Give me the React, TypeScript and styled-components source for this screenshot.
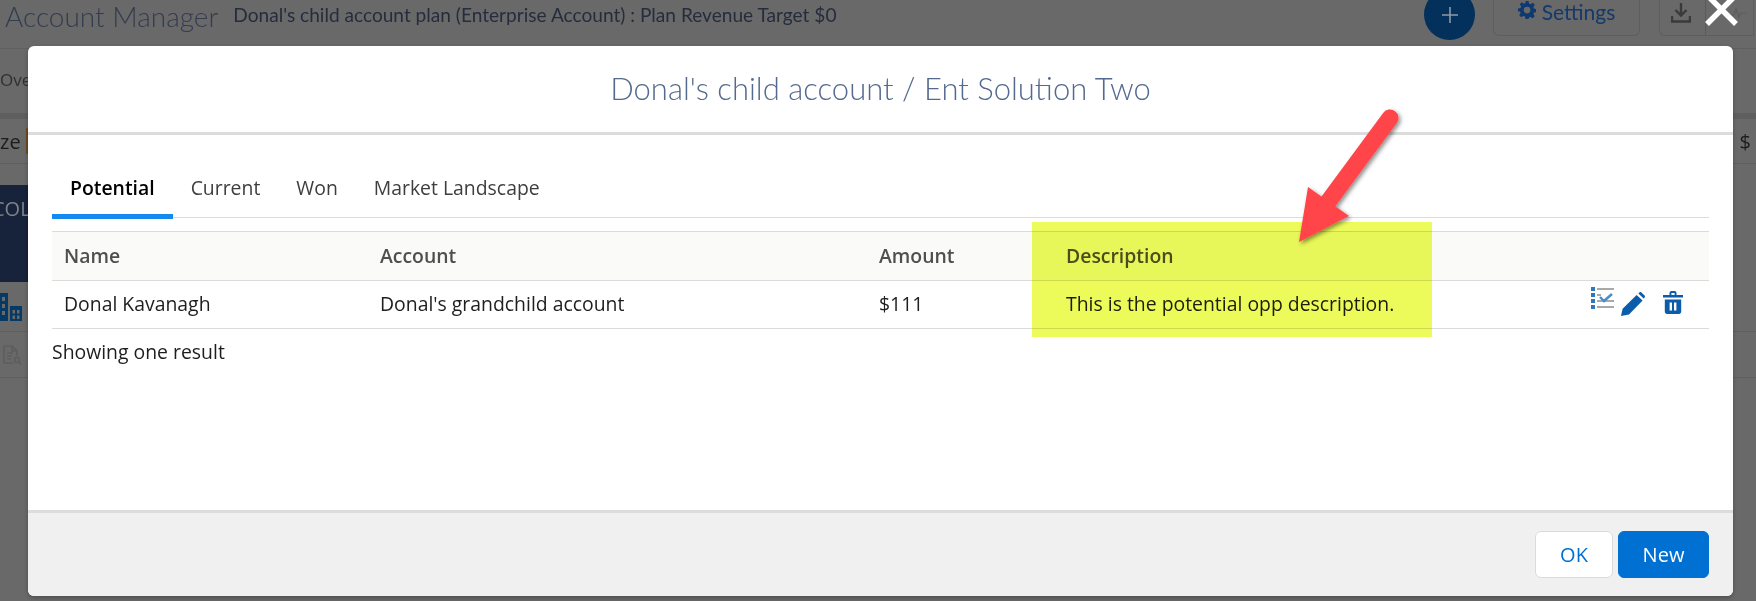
import React from "react";
import styled, { createGlobalStyle } from "styled-components";

const GlobalStyle = createGlobalStyle`
  html, body {
    margin: 0;
    padding: 0;
    background: #696969;
  }
  * {
    box-sizing: border-box;
  }
`;

const Page = styled.div`
  position: relative;
  width: 1756px;
  height: 601px;
  overflow: hidden;
  background: #696969;
  font-family: "Open Sans", "Lato", sans-serif;
`;

/* ---- page behind the dialog ---- */

const TopBar = styled.div`
  display: flex;
  align-items: flex-start;
  height: 49px;
  padding-right: 2px;
  border-bottom: 1px solid #5f5f5f;
`;

const AppName = styled.div`
  margin-left: 5px;
  margin-top: -2px;
  font-family: "Lato", sans-serif;
  font-size: 28px;
  font-weight: 300;
  line-height: 36px;
  color: #333d4e;
`;

const PlanName = styled.div`
  margin-left: 15px;
  margin-top: 3px;
  flex: 1;
  font-family: "Lato", sans-serif;
  font-size: 19.1px;
  line-height: 24px;
  color: #252d3d;
`;

const AddButton = styled.div`
  display: flex;
  align-items: center;
  justify-content: center;
  width: 51px;
  height: 51px;
  margin-top: -11px;
  border-radius: 50%;
  background: #03315c;
`;

const HeadButton = styled.div<{ $width: number; $left: number }>`
  display: flex;
  align-items: center;
  justify-content: center;
  gap: 6px;
  width: ${(p) => p.$width}px;
  height: 36px;
  margin-left: ${(p) => p.$left}px;
  padding-bottom: 12px;
  border: 1px solid #5e5e5e;
  border-top: none;
  border-radius: 0 0 6px 6px;
  font-family: "Lato", sans-serif;
  font-size: 21px;
  color: #14396a;
`;

const GroupButton = styled.div<{ $width: number; $left?: number; $end?: boolean }>`
  display: flex;
  align-items: center;
  justify-content: center;
  width: ${(p) => p.$width}px;
  height: 36px;
  margin-left: ${(p) => p.$left ?? 0}px;
  padding-bottom: 10px;
  padding-right: ${(p) => (p.$end ? 0 : 3)}px;
  border: 1px solid #5e5e5e;
  border-top: none;
  border-left: ${(p) => (p.$end ? "1px solid #5a5a5a" : "1px solid #5e5e5e")};
  border-right: ${(p) => (p.$end ? "1px solid #5e5e5e" : "none")};
  border-radius: ${(p) => (p.$end ? "0" : "0 0 0 6px")};
`;

const NavRow = styled.div`
  height: 64px;
  padding-top: 19px;
  font-size: 17px;
  line-height: 24px;
  color: #303030;
`;

const Band = styled.div`
  height: 6px;
  background: #5f5f5f;
`;

const FilterRow = styled.div`
  display: flex;
  justify-content: space-between;
  height: 45px;
  padding-top: 9px;
  border-bottom: 1px solid #5f5f5f;
  font-size: 20px;
  line-height: 28px;
  color: #1c1c1c;
`;

const SizeLabel = styled.span`
  width: 28px;
  height: 26px;
  border-right: 2px solid #6b4a1f;
`;

const DollarLabel = styled.span`
  margin-right: 5px;
`;

const DarkBlock = styled.div`
  width: 28px;
  height: 97px;
  margin-top: 21px;
  padding-top: 10px;
  overflow: hidden;
  background: #17233a;
  font-size: 20px;
  line-height: 28px;
  color: #7c8288;
  white-space: nowrap;
  text-indent: -8px;
`;

const RailRow = styled.div<{ $height: number }>`
  display: flex;
  align-items: center;
  height: ${(p) => p.$height}px;
  border-bottom: 1px solid #5f5f5f;
`;

/* ---- dialog ---- */

const Modal = styled.div`
  position: absolute;
  left: 28px;
  top: 46px;
  display: flex;
  flex-direction: column;
  width: 1705px;
  height: 550px;
  border-radius: 6px;
  overflow: hidden;
  background: #fff;
  box-shadow: 0 2px 4px rgba(0, 0, 0, 0.25);
`;

const ModalHeader = styled.div`
  display: flex;
  align-items: center;
  justify-content: center;
  height: 89px;
  padding-bottom: 3px;
  border-bottom: 3px solid #dcdcdc;
  font-family: "Lato", sans-serif;
  font-size: 31px;
  font-weight: 300;
  color: #54698d;
`;

const ModalBody = styled.div`
  flex: 1;
  padding: 35px 24px 0;
`;

const Tabs = styled.div`
  display: flex;
  height: 48px;
  border-bottom: 1px solid #d8dde6;
`;

const Tab = styled.div<{ $active?: boolean }>`
  height: 49px;
  padding: 0 18px;
  border-bottom: 5px solid ${(p) => (p.$active ? "#1589ee" : "transparent")};
  font-size: 19.4px;
  font-weight: ${(p) => (p.$active ? 600 : 400)};
  line-height: 36px;
  color: ${(p) => (p.$active ? "#000" : "#3e3e3c")};
`;

const Table = styled.div`
  margin-top: 13px;
  border-top: 1px solid #dddbda;
`;

const Row = styled.div<{ $head?: boolean }>`
  display: grid;
  grid-template-columns: 316px 499px 187px 1fr 118px;
  align-items: center;
  height: ${(p) => (p.$head ? 49 : 48)}px;
  padding-bottom: 2px;
  border-bottom: 1px solid #dddbda;
  background: ${(p) => (p.$head ? "#fafaf9" : "#fff")};
  font-size: 19.4px;
  font-weight: ${(p) => (p.$head ? 600 : 400)};
  color: ${(p) => (p.$head ? "#514f4d" : "#1e1e1e")};
`;

const Cell = styled.div`
  padding-left: 12px;
`;

const Actions = styled.div`
  display: flex;
  align-items: center;
  gap: 7px;
`;

const ResultCount = styled.div`
  margin-top: 11px;
  font-size: 19.4px;
  line-height: 24px;
  color: #1e1e1e;
`;

const ModalFooter = styled.div`
  display: flex;
  justify-content: flex-end;
  gap: 5px;
  height: 86px;
  padding: 18px 24px 0 0;
  border-top: 3px solid #dcdcdc;
  background: #f0f0f0;
`;

const FooterButton = styled.button<{ $primary?: boolean }>`
  width: ${(p) => (p.$primary ? 91 : 78)}px;
  height: 47px;
  border: 1px solid ${(p) => (p.$primary ? "#0070d2" : "#dddbda")};
  border-radius: 6px;
  background: ${(p) => (p.$primary ? "#0070d2" : "#fff")};
  color: ${(p) => (p.$primary ? "#fff" : "#0070d2")};
  font-family: inherit;
  font-size: 20px;
`;

/* ---- things lying over the dialog ---- */

const Highlight = styled.div`
  position: absolute;
  left: 1032px;
  top: 222px;
  width: 400px;
  height: 115px;
  background: #ecfb5a;
  mix-blend-mode: multiply;
`;

const Overlay = styled.svg`
  position: absolute;
  left: 0;
  top: 0;
  pointer-events: none;
`;

const ListIcon = () => (
  <svg width="23" height="23" viewBox="0 0 23 23" style={{ marginTop: -11 }}>
    <g fill="#2f79b9">
      <rect x="0" y="0" width="4" height="4" />
      <rect x="0" y="6" width="4" height="4" />
      <rect x="0" y="12" width="4" height="4" />
      <rect x="0" y="18" width="4" height="4" />
    </g>
    <g fill="#a9a9a9">
      <rect x="6" y="1" width="17" height="2" />
      <rect x="6" y="7" width="4" height="2" />
      <rect x="6" y="13" width="17" height="2" />
      <rect x="6" y="19" width="17" height="2" />
    </g>
    <path d="M9 10l4 4 8-7" fill="none" stroke="#4a8cc6" strokeWidth="2.400" />
  </svg>
);

const PencilIcon = () => (
  <svg width="24" height="24" viewBox="0 0 24 24">
    <path
      d="M0 24l1.600-7.200L15.600 3l6 5.600L8 22.400zM17.400 1.400l1-1c.6-.5 1.400-.5 2 0l3.200 3c.5.6.5 1.400 0 2l-1 1z"
      fill="#0b5cab"
    />
  </svg>
);

const TrashIcon = () => (
  <svg width="20" height="23" viewBox="0 0 20 23" style={{ marginLeft: 11, marginTop: -2 }}>
    <path
      d="M0 4h6.500V2c0-1 .7-2 2-2h3c1.300 0 2 1 2 2v2H20v2.400H0zM8.400 4h3.200V2H8.400zM1.800 8.400h16.400v12.400c0 1.200-1 2.200-2.200 2.200H4c-1.200 0-2.200-1-2.200-2.200zM6.600 11.500v8h2.400v-8zM11 11.500v8h2.400v-8z"
      fill="#0b5cab"
      fillRule="evenodd"
    />
  </svg>
);

const GearIcon = () => (
  <svg width="18" height="18" viewBox="0 0 24 24" style={{ marginTop: -4 }}>
    <path
      d="M10 0h4l.7 3.400 2 .8L19.600 2.300l2.800 2.800-1.900 2.900.8 2 3.400.7v4l-3.400.7-.8 2 1.900 2.900-2.800 2.800-2.900-1.900-2 .8L14 24h-4l-.7-3.400-2-.8-2.900 1.900-2.800-2.800 1.900-2.900-.8-2L0 14v-4l3.400-.7.8-2-1.900-2.900 2.800-2.800 2.900 1.900 2-.8zM12 7.500a4.500 4.500 0 1 0 0 9 4.500 4.500 0 0 0 0-9z"
      fill="#0f3a70"
      fillRule="evenodd"
    />
  </svg>
);

const BuildingIcon = () => (
  <svg width="22" height="28" viewBox="0 0 22 28">
    <path
      d="M-3 0h11v28H-3zM10 13h12v15H10zM2 4v4h3V4zM2 11v4h3v-4zM2 18v4h3v-4zM12.500 17v3.500H15V17zM17 17v3.500h2.500V17zM12.500 22.500V26H15v-3.500zM17 22.500V26h2.500v-3.500z"
      fill="#063a66"
      fillRule="evenodd"
    />
  </svg>
);

const DocIcon = () => (
  <svg width="20" height="20" viewBox="0 0 20 20" style={{ marginLeft: 3 }}>
    <path
      d="M1 1h8l5 5v5M1 1v17h9M4 8h6M4 11h5M4 14h4M9 1v5h5"
      fill="none"
      stroke="#5d5d5d"
      strokeWidth="1.600"
    />
    <circle cx="14" cy="15" r="2.500" fill="none" stroke="#5d5d5d" strokeWidth="1.600" />
    <path d="M16 17l2.500 2.500" stroke="#5d5d5d" strokeWidth="1.600" />
  </svg>
);

export default function App() {
  return (
    <Page>
      <GlobalStyle />
      <TopBar>
        <AppName>Account Manager</AppName>
        <PlanName>Donal's child account plan (Enterprise Account) : Plan Revenue Target $0</PlanName>
        <AddButton>
          <svg width="16" height="16" viewBox="0 0 16 16">
            <path d="M8 0v16M0 8h16" stroke="#8f9aa5" strokeWidth="1.600" />
          </svg>
        </AddButton>
        <HeadButton $width={147} $left={18}>
          <GearIcon />
          Settings
        </HeadButton>
        <GroupButton $width={46} $left={19}>
          <svg width="20" height="20" viewBox="0 0 20 20">
            <path d="M10 0v12M4.500 7l5.500 5.500L15.500 7" fill="none" stroke="#3a3a3a" strokeWidth="2.400" />
            <path d="M1 13v5.500h18V13" fill="none" stroke="#3a3a3a" strokeWidth="2.400" />
          </svg>
        </GroupButton>
        <GroupButton $width={49} $end>
          <svg width="18" height="12" viewBox="0 0 18 12" style={{ marginLeft: 16 }}>
            <path d="M0 8h5l2-6 3 8 2-4h6" fill="none" stroke="#5c5c5c" strokeWidth="1.200" />
          </svg>
        </GroupButton>
      </TopBar>
      <NavRow>Ove</NavRow>
      <Band />
      <FilterRow>
        <SizeLabel>ze</SizeLabel>
        <DollarLabel>$</DollarLabel>
      </FilterRow>
      <DarkBlock>COL</DarkBlock>
      <RailRow $height={50}>
        <BuildingIcon />
      </RailRow>
      <RailRow $height={46}>
        <DocIcon />
      </RailRow>

      <Modal>
        <ModalHeader>Donal's child account / Ent Solution Two</ModalHeader>
        <ModalBody>
          <Tabs>
            <Tab $active>Potential</Tab>
            <Tab>Current</Tab>
            <Tab>Won</Tab>
            <Tab>Market Landscape</Tab>
          </Tabs>
          <Table>
            <Row $head>
              <Cell>Name</Cell>
              <Cell>Account</Cell>
              <Cell>Amount</Cell>
              <Cell>Description</Cell>
              <div />
            </Row>
            <Row>
              <Cell>Donal Kavanagh</Cell>
              <Cell>Donal's grandchild account</Cell>
              <Cell>$111</Cell>
              <Cell>This is the potential opp description.</Cell>
              <Actions>
                <ListIcon />
                <PencilIcon />
                <TrashIcon />
              </Actions>
            </Row>
          </Table>
          <ResultCount>Showing one result</ResultCount>
        </ModalBody>
        <ModalFooter>
          <FooterButton>OK</FooterButton>
          <FooterButton $primary>New</FooterButton>
        </ModalFooter>
      </Modal>

      <Highlight />
      <Overlay width="1756" height="601" viewBox="0 0 1756 601">
        <defs>
          <filter id="arrowShadow" x="-30%" y="-30%" width="160%" height="160%">
            <feDropShadow dx="2" dy="2" stdDeviation="2" floodColor="#000" floodOpacity="0.45" />
          </filter>
        </defs>
        <g filter="url(#arrowShadow)" fill="#ff4449" stroke="none">
          <path d="M1390 118L1328 202" fill="none" stroke="#ff4449" strokeWidth="17" strokeLinecap="round" />
          <path d="M1308 187L1349 216L1299 242Z" />
        </g>
        <path d="M1707 24L1736 -5M1707 -5L1736 24" stroke="#fff" strokeWidth="5.500" fill="none" />
      </Overlay>
    </Page>
  );
}
